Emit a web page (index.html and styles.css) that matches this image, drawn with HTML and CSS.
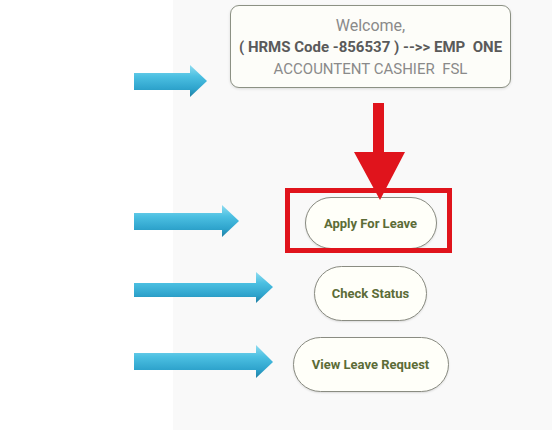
FILE: index.html
```html
<!DOCTYPE html>
<html>
<head>
<meta charset="utf-8">
<link rel="stylesheet" href="styles.css">
</head>
<body>
<div class="page">
  <div class="gutter"></div>
  <main class="panel">
    <div class="welcome">
      <div class="w-title">Welcome,</div>
      <div class="w-code">( HRMS Code -856537 ) --&gt;&gt; EMP&nbsp; ONE</div>
      <div class="w-role">ACCOUNTENT CASHIER&nbsp; FSL</div>
    </div>
    <div class="actions">
      <button class="pill pill-apply">Apply For Leave</button>
      <button class="pill pill-check">Check Status</button>
      <button class="pill pill-view">View Leave Request</button>
    </div>
  </main>
  <svg class="annot" width="552" height="430" viewBox="0 0 552 430" xmlns="http://www.w3.org/2000/svg">
    <defs>
      <linearGradient id="blue" x1="0" y1="0" x2="0" y2="1">
        <stop offset="0" stop-color="#8fdcf0"/>
        <stop offset="0.35" stop-color="#4cc0e2"/>
        <stop offset="0.75" stop-color="#2ea3cc"/>
        <stop offset="1" stop-color="#1f7fa3"/>
      </linearGradient>
    </defs>
    <path d="M134 73 H190 V65 L207 81 L190 97 V90 H134 Z" fill="url(#blue)"/>
    <path d="M134 213 H222 V205 L239 221 L222 237 V230 H134 Z" fill="url(#blue)"/>
    <path d="M134 283 H256 V272 L273 287 L256 303 V297 H134 Z" fill="url(#blue)"/>
    <path d="M134 353 H256 V345 L273 362 L256 378 V370 H134 Z" fill="url(#blue)"/>
    <path d="M373 103 H384 V152 H405 L380 200 L354 152 H373 Z" fill="#e0141c"/>
    <rect x="287.5" y="190.5" width="162" height="60" fill="none" stroke="#e0141c" stroke-width="5"/>
  </svg>
</div>
</body>
</html>
```
FILE: styles.css
```css
html, body {
  margin: 0;
  padding: 0;
  background: #ffffff;
}
.page {
  position: relative;
  width: 552px;
  height: 430px;
  display: flex;
  overflow: hidden;
  font-family: Roboto, "Liberation Sans", Arial, sans-serif;
}
.gutter {
  width: 173px;
  flex: none;
  background: #ffffff;
}
.panel {
  flex: 1;
  background: #f9f9f9;
  padding: 5px 0 0 16px;
  display: flex;
  flex-direction: column;
  align-items: center;
}
.welcome {
  width: 279px;
  height: 79px;
  border: 1.5px solid #8c9184;
  border-radius: 9px;
  background: #fdfdf9;
  box-shadow: 0 1px 3px rgba(0,0,0,0.12);
  display: flex;
  flex-direction: column;
  align-items: center;
  justify-content: center;
  gap: 3px;
  padding-top: 2px;
  box-sizing: content-box;
}
.w-title {
  font-size: 16px;
  color: #8a8a8a;
  line-height: 19px;
}
.w-code {
  font-size: 15px;
  font-weight: bold;
  color: #5a5a5a;
  line-height: 19px;
  white-space: nowrap;
}
.w-role {
  font-size: 15px;
  color: #8a8a8a;
  line-height: 19px;
  white-space: nowrap;
}
.actions {
  margin-top: 109px;
  display: flex;
  flex-direction: column;
  align-items: center;
}
.pill {
  font-family: Roboto, "Liberation Sans", Arial, sans-serif;
  font-weight: bold;
  font-size: 13px;
  color: #5c6c37;
  background: #fffff9;
  border: 1.5px solid #8a8c82;
  border-radius: 28px;
  padding: 0;
  box-shadow: 0 1px 2px rgba(0,0,0,0.12);
}
.pill-apply {
  width: 132px;
  height: 52px;
}
.pill-check {
  width: 113px;
  height: 55px;
  margin-top: 17px;
}
.pill-view {
  width: 156px;
  height: 55px;
  margin-top: 16px;
}
.annot {
  position: absolute;
  left: 0;
  top: 0;
  pointer-events: none;
}
```
